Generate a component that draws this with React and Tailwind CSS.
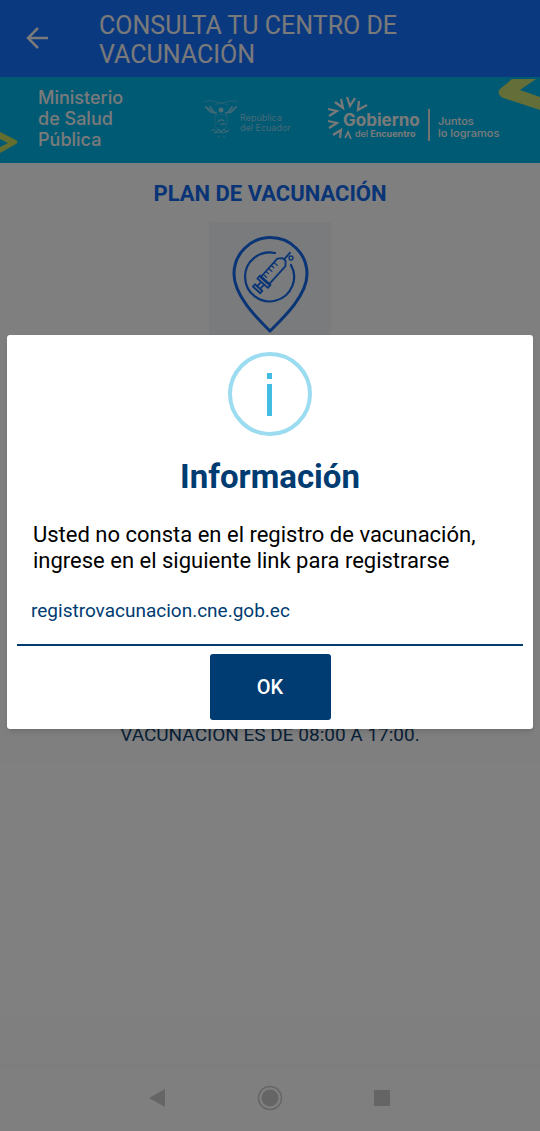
import React, { useState } from 'react';

const BackArrow = () => (
  <svg viewBox="0 0 24 24" className="w-6 h-6" fill="none" stroke="currentColor" strokeWidth="2.5">
    <path d="M22 11H2M12 1L2 11l10 10" />
  </svg>
);

const CoatOfArms = () => (
  <svg viewBox="0 0 36 40" className="w-9 h-10 shrink-0" fill="none" stroke="#a9dcef" strokeLinecap="round">
    <path d="M1 3c4-2 9-1 12 0s7 1 10 0 8-2 12 0" strokeWidth="1" opacity="0.45" />
    <path d="M3 8l5 5M7 8l3 4M9 13l4 1M33 8l-5 5M29 8l-3 4M27 13l-4 1" strokeWidth="2" opacity="0.75" />
    <circle cx="18" cy="11" r="2.5" fill="#a9dcef" stroke="none" opacity="0.9" />
    <path d="M11 6c3-2 11-2 14 0M12 17c3-2 9-2 12 0M12 17v8c0 4 3 6 6 7 3-1 6-3 6-7v-8" strokeWidth="0.8" opacity="0.4" />
    <path d="M15 23c1-2 4-3 6-1M18 25h4" strokeWidth="1.3" opacity="0.7" />
    <path d="M8 32l3-2 2 3 3-3 2 3 3-3 2 3 3-2M11 34l5-1 4 1 5-2" strokeWidth="1" opacity="0.7" />
    <path d="M15 38h2M20 38h2" strokeWidth="1" opacity="0.5" />
  </svg>
);

const Rays = () => (
  <svg viewBox="0 0 44 46" className="w-11 h-[46px]" fill="none" stroke="#f2f2f2" strokeWidth="2.2">
    <path d="M32 6l-1 9 9-5" />
    <path d="M20 2l3 9 5-8" />
    <path d="M8 7l8 6-2-9" />
    <path d="M1 14l9 2-8 5" />
    <path d="M1 26l9 2-8 5" />
    <path d="M6 40l8-5-1 8" />
    <path d="M18 43l3-6 3 7" strokeWidth="1.7" />
  </svg>
);

const VaccinePin = () => (
  <svg viewBox="0 0 122 124" className="w-[122px] h-[124px]" fill="none" stroke="#1268ea" strokeLinecap="round" strokeLinejoin="round">
    <rect width="122" height="124" fill="#f2f6fb" stroke="none" />
    <path d="M61 109C49 97 25 74 25 52a36.500 36.500 0 0 1 73 0c0 22-25 45-37 57z" strokeWidth="3" />
    <path d="M66 31a24.500 24.500 0 1 0 16 12" strokeWidth="2.200" />
    <g transform="translate(61 53) rotate(42)" strokeWidth="1.800">
      <path d="M-5.500-17L-2-21h4l3.500 4v25h-11zM0-22v-8" />
      <path d="M-5-12h4M-5-8h3M-5-4h4M-5 0h3M-5 4h4" strokeWidth="1.200" />
      <path d="M-7 7H7v4H-7zM-2 12v5M2 12v5M-5 17H5v3H-5z" />
    </g>
    <circle cx="82" cy="36" r="2" strokeWidth="1.300" />
  </svg>
);

const Banner = () => (
  <div className="relative flex items-start h-[86px] overflow-hidden bg-[#00b4e8] text-[#f4f4f4] font-[Inter,sans-serif]">
    <svg viewBox="0 0 18 26" className="absolute left-0 top-[52px] w-[18px] h-[26px]" fill="#c9dc5c">
      <path d="M0 3l16 8q3 2 0 4L0 24v-6l8-4-8-4z" />
    </svg>
    <svg viewBox="0 0 42 33" className="absolute right-0 top-[1px] w-[42px] h-[33px]" fill="#c8dc70">
      <path d="M14 1h24L22 12l20 7v13L5 20q-7-4-3-9z" />
    </svg>

    <p className="w-[166px] pl-[38px] pt-[10px] text-[18px] leading-[21px] font-medium">
      Ministerio<br />de Salud<br />Pública
    </p>
    <div className="flex items-start gap-px w-[124px] pt-[22px] pl-[37px] shrink-0">
      <CoatOfArms />
      <p className="pt-[14px] text-[9px] leading-[10px] text-[#8fd3ee] whitespace-nowrap">
        República<br />del Ecuador
      </p>
    </div>
    <div className="relative w-[138px] pt-[34px] pl-[53px] shrink-0">
      <div className="absolute left-[37px] top-[18px]"><Rays /></div>
      <p className="text-[17px] leading-[18px] font-bold whitespace-nowrap">Gobierno</p>
      <p className="pl-3 text-[9px] leading-[10px] font-bold whitespace-nowrap">
        <span className="font-medium">del</span> Encuentro
      </p>
    </div>
    <p className="mt-[32px] pl-2 pt-[6px] h-8 border-l-2 border-[#e6e6e6] text-[11px] leading-[12px] font-medium whitespace-nowrap">
      Juntos<br />lo logramos
    </p>
  </div>
);

const NavBar = () => (
  <nav className="flex items-center justify-center gap-[90px] h-[66px] pb-0.5 border-t border-[#f6f6f6] bg-white text-[#cacaca]">
    <button type="button" aria-label="Atrás">
      <svg viewBox="0 0 18 20" className="w-[18px] h-5" fill="currentColor"><path d="M16 1v18L0 10z" /></svg>
    </button>
    <button type="button" aria-label="Inicio">
      <svg viewBox="0 0 26 26" className="w-[26px] h-[26px]" fill="currentColor">
        <circle cx="13" cy="13" r="8.500" />
        <circle cx="13" cy="13" r="11.500" fill="none" stroke="currentColor" strokeWidth="1.500" />
      </svg>
    </button>
    <button type="button" aria-label="Recientes">
      <svg viewBox="0 0 18 18" className="w-[18px] h-[18px]" fill="currentColor"><path d="M1 1h16v16H1z" /></svg>
    </button>
  </nav>
);

const InfoDialog = ({ onClose }) => (
  <div className="absolute inset-0 flex items-center justify-center px-[7px] pb-[67px] bg-black/50">
    <div role="dialog" aria-modal="true" aria-labelledby="info-title" className="flex flex-col items-center w-full px-[10px] pt-4 pb-[9px] rounded-[3px] bg-white shadow-md">
      <svg viewBox="0 0 86 86" className="w-[86px] h-[86px]" fill="none">
        <circle cx="43" cy="43" r="40" stroke="#9bdcf0" strokeWidth="4" />
        <path d="M40 22h5v6h-5zM40 33h5v32h-5z" fill="#42bce2" />
      </svg>
      <h2 id="info-title" className="mt-5 text-[33px] leading-[40px] font-bold text-[#003c72]">Información</h2>
      <p className="w-full px-4 mt-[25px] text-[22px] leading-[26px] text-black">
        Usted no consta en el registro de vacunación, ingrese en el siguiente link para registrarse
      </p>
      <div className="w-full h-[72px] pt-[25px] px-[14px] border-b-2 border-[#003c72]">
        <a href="#registro" className="block text-[19px] leading-6 text-[#003c72]">registrovacunacion.cne.gob.ec</a>
      </div>
      <button type="button" onClick={onClose} className="mt-2 w-[121px] h-[66px] rounded-[3px] bg-[#003c72] text-[20px] font-medium text-white">
        OK
      </button>
    </div>
  </div>
);

const App = () => {
  const [open, setOpen] = useState(true);

  return (
    <div className="relative flex flex-col min-h-screen bg-white font-[Roboto,sans-serif]">
      <header className="flex items-center h-[77px] bg-[#1672ff] text-[#f4f4f4]">
        <button type="button" aria-label="Volver" className="ml-[26px] mr-[49px]"><BackArrow /></button>
        <h1 className="pt-[3px] pr-24 text-[25px] leading-[29px]">CONSULTA TU CENTRO DE VACUNACIÓN</h1>
      </header>
      <Banner />

      <main className="flex flex-col items-center flex-1 text-center">
        <h2 className="mt-4 text-[22px] leading-[30px] font-bold text-[#1268ea]">PLAN DE VACUNACIÓN</h2>
        <div className="mt-[13px]"><VaccinePin /></div>
        <p className="mt-auto mb-[318px] text-[19px] leading-6 text-[#124270]">VACUNACIÓN ES DE 08:00 A 17:00.</p>
      </main>

      <NavBar />
      {open && <InfoDialog onClose={() => setOpen(false)} />}
    </div>
  );
};

export default App;
